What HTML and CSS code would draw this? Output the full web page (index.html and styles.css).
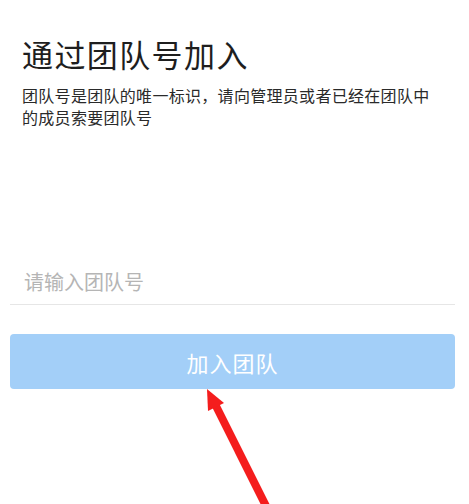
FILE: index.html
```html
<!DOCTYPE html>
<html lang="zh-CN">
<head>
<meta charset="utf-8">
<title>通过团队号加入</title>
<link rel="stylesheet" href="styles.css">
</head>
<body>
<main class="page">
  <header class="intro">
    <h1 class="title">通过团队号加入</h1>
    <p class="desc">团队号是团队的唯一标识，请向管理员或者已经在团队中的成员索要团队号</p>
  </header>
  <div class="field">
    <span class="placeholder">请输入团队号</span>
  </div>
  <button class="join-btn" type="button">加入团队</button>
</main>
<svg class="arrow" width="469" height="504" viewBox="0 0 469 504" aria-hidden="true">
  <line x1="214" y1="402" x2="272" y2="518" stroke="#f41d1d" stroke-width="8" stroke-linecap="butt"/>
  <polygon points="207,389 224,403 208,411" fill="#f41d1d"/>
</svg>
</body>
</html>
```

FILE: styles.css
```css
html, body {
  margin: 0;
  padding: 0;
  background: #ffffff;
}
body {
  font-family: "Noto Sans CJK SC", "Noto Sans", sans-serif;
  width: 469px;
  height: 504px;
  overflow: hidden;
  position: relative;
}
.page {
  padding: 0 14px 0 10px;
  display: flex;
  flex-direction: column;
}
.intro {
  padding: 0 12px;
}
.title {
  margin: 34px 0 0;
  font-size: 31px;
  line-height: 40px;
  font-weight: 400;
  color: #1e1e1e;
  letter-spacing: 1.4px;
}
.desc {
  margin: 10px 0 0;
  font-size: 16px;
  line-height: 22px;
  color: #2a2a2a;
  letter-spacing: 0.3px;
  width: 416px;
}
.field {
  margin-top: 130px;
  height: 46px;
  display: flex;
  align-items: center;
  padding-left: 14px;
  border-bottom: 1px solid #e6e6e6;
}
.placeholder {
  font-size: 20px;
  color: #b5b5b5;
}
.join-btn {
  margin-top: 29px;
  height: 55px;
  border: none;
  border-radius: 4px;
  background: #a3cff8;
  color: #ffffff;
  font-family: inherit;
  font-size: 22px;
  letter-spacing: 1px;
  padding: 0;
}
.arrow {
  position: absolute;
  left: 0;
  top: 0;
  pointer-events: none;
}
```
